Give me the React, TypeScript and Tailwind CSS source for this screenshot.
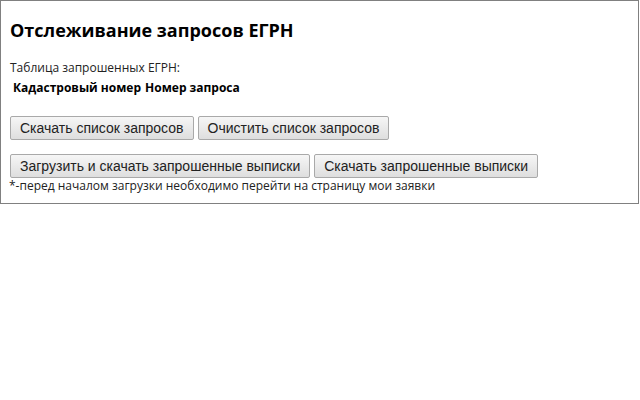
import React from "react";

function Btn({ children }: { children: React.ReactNode }) {
  return (
    <button className="h-[24px] px-[9px] border border-[#a9a9a9] rounded-[2px] bg-gradient-to-b from-[#f6f6f6] to-[#dedede] text-[14px] leading-none text-[#222] [font-family:'Liberation_Sans',Arial,sans-serif]">
      {children}
    </button>
  );
}

export default function App() {
  return (
    <div className="w-[640px] h-[400px] bg-white">
      <div className="w-[639px] h-[204px] border border-[#808080] bg-white pl-[9px] pt-[14px] text-black [font-family:'Open_Sans',sans-serif]">
        <h1 className="text-[18px] font-bold leading-[30px]">Отслеживание запросов ЕГРН</h1>
        <div className="mt-[13px] text-[12px] leading-[20px] text-[#222]">Таблица запрошенных ЕГРН:</div>
        <div className="flex gap-[4px] pl-[3px] text-[12px] font-bold leading-[20px]">
          <span>Кадастровый номер</span>
          <span>Номер запроса</span>
        </div>
        <div className="mt-[18px] flex gap-[4px]">
          <Btn>Скачать список запросов</Btn>
          <Btn>Очистить список запросов</Btn>
        </div>
        <div className="mt-[14px] flex gap-[4px]">
          <Btn>Загрузить и скачать запрошенные выписки</Btn>
          <Btn>Скачать запрошенные выписки</Btn>
        </div>
        <div className="-ml-[1px] text-[12px] leading-[16px] text-[#222]">*-перед началом загрузки необходимо перейти на страницу мои заявки</div>
      </div>
    </div>
  );
}
